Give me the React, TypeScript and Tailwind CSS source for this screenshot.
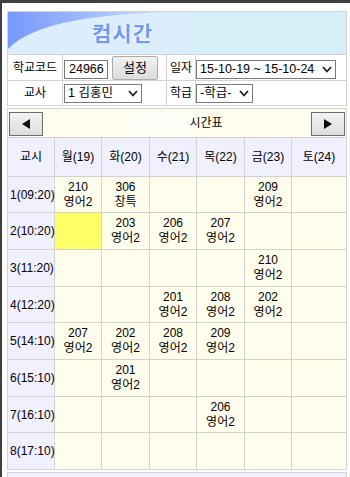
import type { ReactNode } from "react";

type Slot = { room: string; subject: string } | null | "mark";

const days = ["월(19)", "화(20)", "수(21)", "목(22)", "금(23)", "토(24)"];

const periods: { label: string; h: string; slots: Slot[] }[] = [
  {
    label: "1(09:20)",
    h: "h-[35px]",
    slots: [
      { room: "210", subject: "영어2" },
      { room: "306", subject: "창특" },
      null,
      null,
      { room: "209", subject: "영어2" },
      null,
    ],
  },
  {
    label: "2(10:20)",
    h: "h-[36px]",
    slots: [
      "mark",
      { room: "203", subject: "영어2" },
      { room: "206", subject: "영어2" },
      { room: "207", subject: "영어2" },
      null,
      null,
    ],
  },
  {
    label: "3(11:20)",
    h: "h-[36px]",
    slots: [null, null, null, null, { room: "210", subject: "영어2" }, null],
  },
  {
    label: "4(12:20)",
    h: "h-[35px]",
    slots: [
      null,
      null,
      { room: "201", subject: "영어2" },
      { room: "208", subject: "영어2" },
      { room: "202", subject: "영어2" },
      null,
    ],
  },
  {
    label: "5(14:10)",
    h: "h-[36px]",
    slots: [
      { room: "207", subject: "영어2" },
      { room: "202", subject: "영어2" },
      { room: "208", subject: "영어2" },
      { room: "209", subject: "영어2" },
      null,
      null,
    ],
  },
  {
    label: "6(15:10)",
    h: "h-[36px]",
    slots: [null, { room: "201", subject: "영어2" }, null, null, null, null],
  },
  {
    label: "7(16:10)",
    h: "h-[35px]",
    slots: [null, null, null, { room: "206", subject: "영어2" }, null, null],
  },
  {
    label: "8(17:10)",
    h: "h-[36px]",
    slots: [null, null, null, null, null, null],
  },
];

const cols = "grid grid-cols-[46px_46px_47px_46px_47px_46px_1fr] gap-px";

function Chevron() {
  return (
    <svg width="10" height="7" viewBox="0 0 10 7" className="shrink-0">
      <polyline points="1,1 5,5.5 9,1" fill="none" stroke="#222" strokeWidth="1.8" />
    </svg>
  );
}

function Select({ w, children }: { w: string; children: ReactNode }) {
  return (
    <div
      className={`${w} h-[19px] border border-[#7a7a7a] bg-white flex items-center justify-between pl-[3px] pr-[3px] text-[12.5px] leading-none whitespace-nowrap`}
    >
      <span>{children}</span>
      <Chevron />
    </div>
  );
}

function NavButton({ dir }: { dir: "left" | "right" }) {
  return (
    <div className="w-[34px] h-[24px] border border-[#6e6e6e] bg-gradient-to-b from-[#f4f4f4] to-[#dcdcdc] flex items-center justify-center">
      <svg width="8" height="10" viewBox="0 0 8 10">
        {dir === "left" ? (
          <polygon points="8,0 0,5 8,10" fill="#111" />
        ) : (
          <polygon points="0,0 8,5 0,10" fill="#111" />
        )}
      </svg>
    </div>
  );
}

export default function App() {
  return (
    <div className="w-[350px] h-[477px] overflow-hidden bg-white border-t-[3px] border-l-[2px] border-[#3f3f3f] pl-[5px] pt-[8px] font-['Liberation_Sans','Noto_Sans_CJK_KR',sans-serif] text-[12px] text-black">
      {/* header + form */}
      <div className="w-[340px] border border-[#d3d3d3]">
        <div className="h-[42px] flex bg-[#d6eef8]">
          <div className="relative w-[182px] bg-[#dcedfd] flex items-center pl-[84px]">
            <svg className="absolute inset-0" width="182" height="42" viewBox="0 0 182 42">
              <defs>
                <linearGradient id="wave" x1="0" x2="1" y1="0" y2="0">
                  <stop offset="0" stopColor="#7798fd" />
                  <stop offset="0.5" stopColor="#a2bffd" />
                  <stop offset="1" stopColor="#dcedfd" />
                </linearGradient>
              </defs>
              <path d="M0,0 H176 C110,1 30,6 0,37 Z" fill="url(#wave)" />
            </svg>
            <span className="relative text-[21px] font-bold tracking-[1px] text-[#6d9cf2] [text-shadow:0_0_2px_#ffffff,0_0_3px_#ffffff] font-['Noto_Sans_CJK_KR',sans-serif]">
              컴시간
            </span>
          </div>
        </div>
        <div className="border-t border-[#d3d3d3] bg-[#d3d3d3] grid grid-cols-[54px_103px_28px_1fr] grid-rows-[25px_24px] gap-px">
          <div className="bg-white flex items-center justify-center">학교코드</div>
          <div className="bg-white flex items-end pl-px gap-[4px]">
            <div className="mb-px w-[44px] h-[19px] border border-[#7a7a7a] flex items-center pl-[4px] text-[12.5px] leading-none">
              24966
            </div>
            <div className="w-[46px] h-[24px] border border-[#adadad] rounded-[2px] bg-gradient-to-b from-[#f2f2f2] to-[#dcdcdc] flex items-center justify-center text-[13px]">
              설정
            </div>
          </div>
          <div className="bg-white flex items-center justify-center">일자</div>
          <div className="bg-white flex items-end pb-px">
            <Select w="w-[140px]">15-10-19 ~ 15-10-24</Select>
          </div>
          <div className="bg-white flex items-center justify-center">교사</div>
          <div className="bg-white flex items-center pl-px">
            <Select w="w-[78px]">1 김홍민</Select>
          </div>
          <div className="bg-white flex items-center justify-center">학급</div>
          <div className="bg-white flex items-center">
            <Select w="w-[57px]">-학급-</Select>
          </div>
        </div>
      </div>

      {/* timetable */}
      <div className="mt-[2px] w-[340px] border border-[#d3d3d3]">
        <div className="h-[28px] bg-[#fffdef] flex items-end justify-between px-px pb-px">
          <NavButton dir="left" />
          <div className="self-center flex items-center">
            <span className="w-[58px] h-[18px] bg-white/70 blur-[2px]" />
            <span>시간표</span>
          </div>
          <NavButton dir="right" />
        </div>
        <div className="border-t border-[#d3d3d3] bg-[#d3d3d3] flex flex-col gap-px">
          <div className={`${cols} h-[38px]`}>
            <div className="bg-[#f0f0ff] flex items-center justify-center">교시</div>
            {days.map((d) => (
              <div key={d} className="bg-[#f0f0ff] flex items-center justify-center">
                {d}
              </div>
            ))}
          </div>
          {periods.map((p) => (
            <div key={p.label} className={`${cols} ${p.h}`}>
              <div className="bg-[#f0f0ff] flex items-center pl-[2px]">{p.label}</div>
              {p.slots.map((s, i) => (
                <div
                  key={i}
                  className={`${s === "mark" ? "bg-[#ffff66]" : "bg-[#fffdec]"} flex flex-col items-center justify-center leading-[15px]`}
                >
                  {s && s !== "mark" && (
                    <>
                      <span>{s.room}</span>
                      <span>{s.subject}</span>
                    </>
                  )}
                </div>
              ))}
            </div>
          ))}
        </div>
      </div>

      <div className="mt-[2px] w-[340px] h-[20px] border border-[#d3d3d3] bg-[#f0f0ff]" />
    </div>
  );
}
